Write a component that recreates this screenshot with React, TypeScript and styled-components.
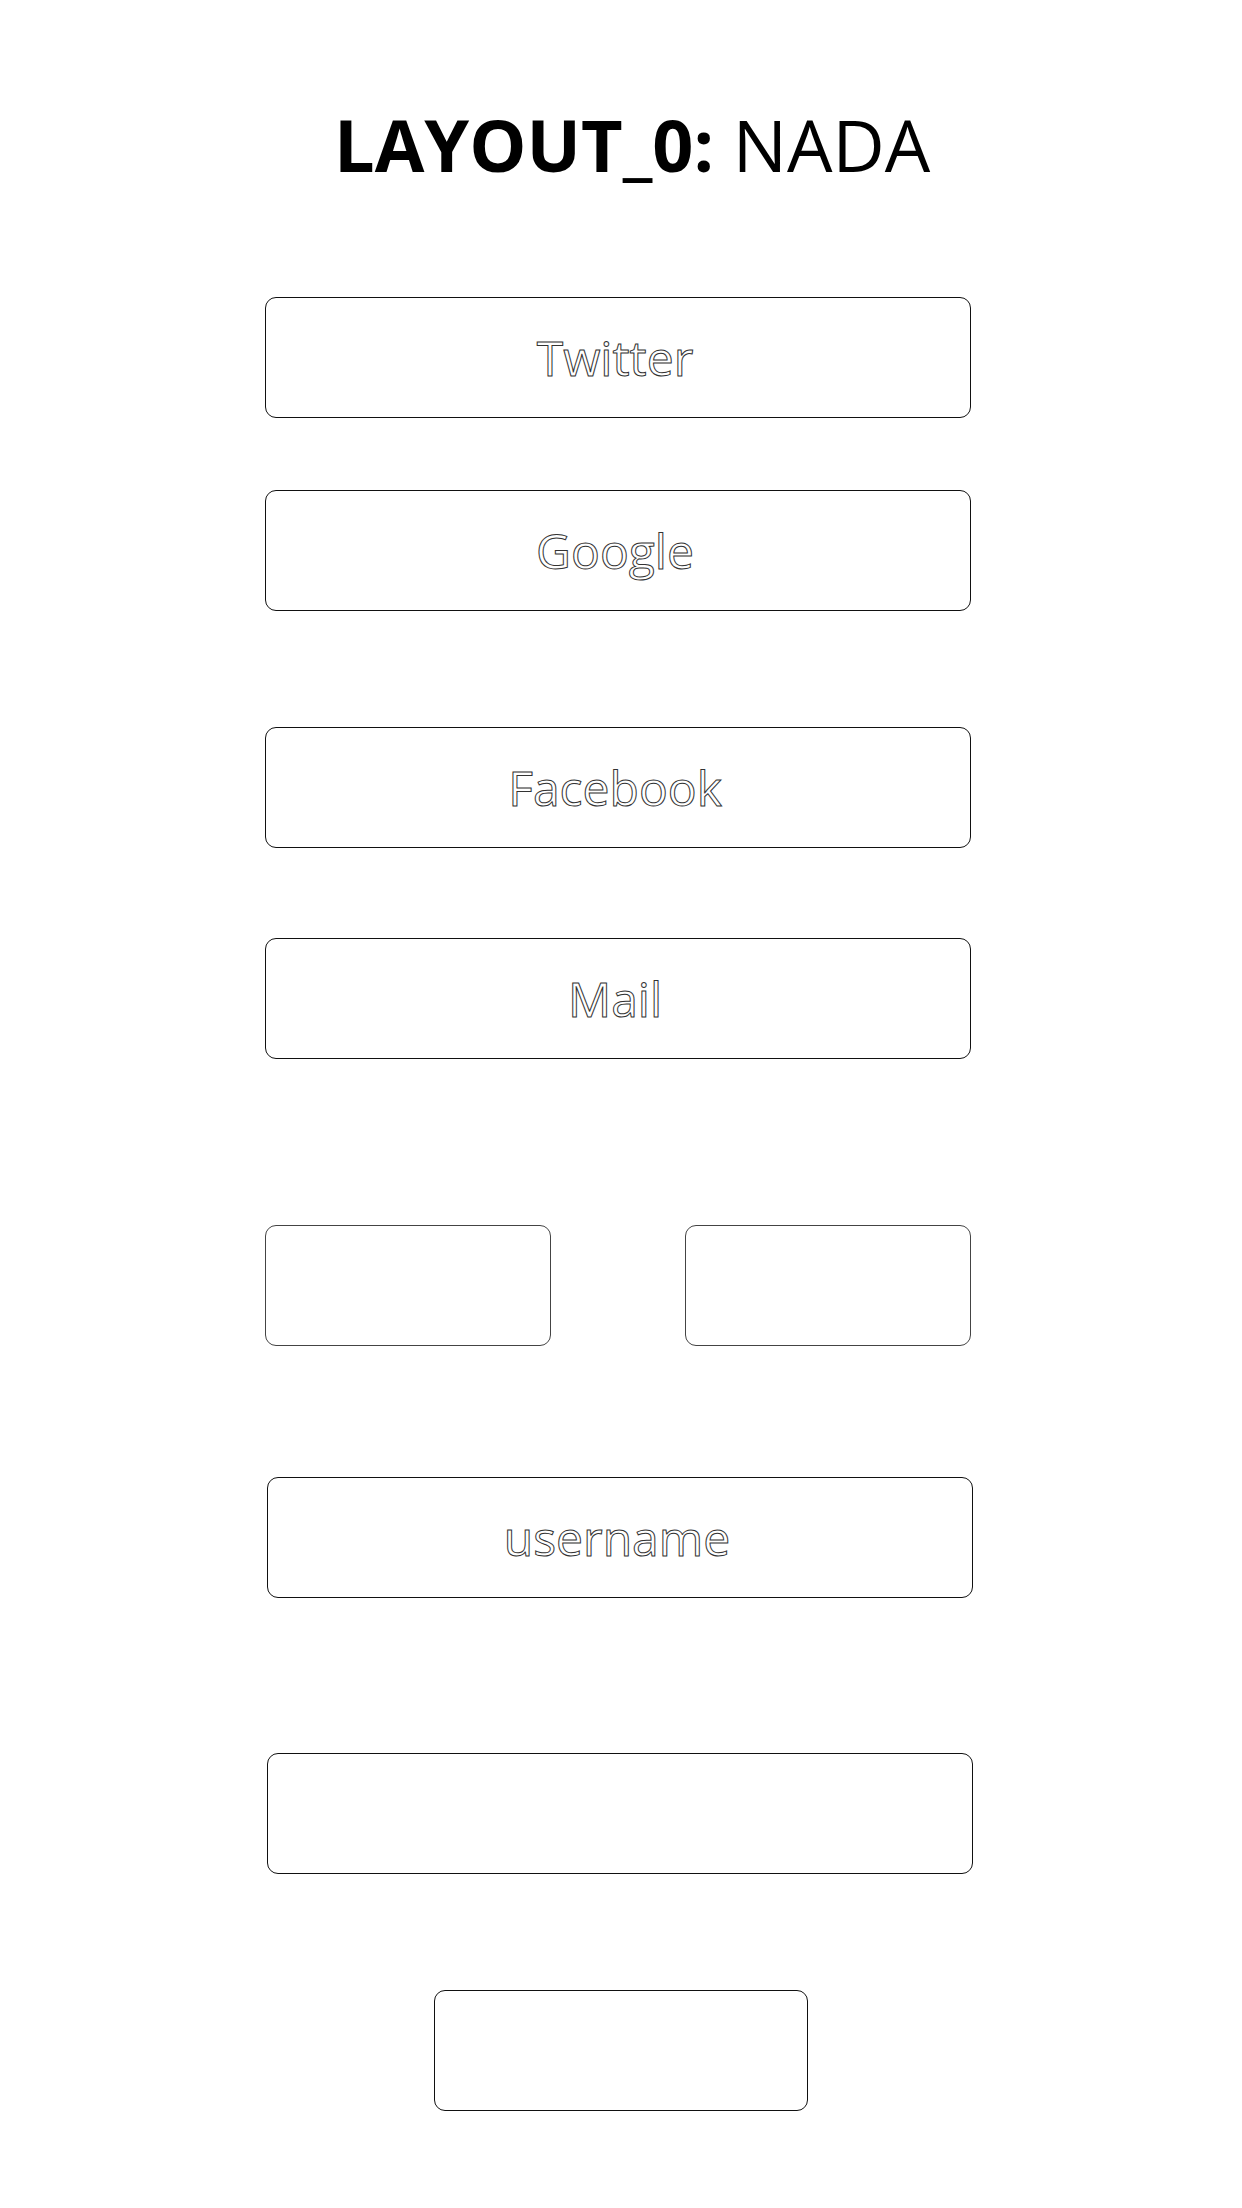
import React from "react";
import styled, { createGlobalStyle } from "styled-components";

const Global = createGlobalStyle`
  html, body { margin: 0; padding: 0; background: #fff; }
  body { font-family: "Open Sans", "Liberation Sans", sans-serif; }
`;

const Page = styled.div`
  width: 1242px;
  min-height: 2208px;
  display: flex;
  flex-direction: column;
  align-items: flex-start;
  padding-left: 265px;
  box-sizing: border-box;
`;

const Title = styled.h1`
  margin: 95px 0 0 69px;
  font-family: "Open Sans", sans-serif;
  font-size: 72px;
  line-height: 98px;
  font-weight: 400;
  color: #000;
  white-space: nowrap;
  b { font-weight: 700; }
`;

const Box = styled.div<{ $top: number; $left?: number; $width?: number }>`
  margin-top: ${(p) => p.$top}px;
  margin-left: ${(p) => p.$left ?? 0}px;
  width: ${(p) => p.$width ?? 706}px;
  height: 121px;
  box-sizing: border-box;
  border: 1.5px solid #111;
  border-radius: 11px;
  display: flex;
  align-items: center;
  justify-content: center;
  background: #fff;
`;

const Label = styled.span`
  font-family: "Open Sans", sans-serif;
  font-size: 48px;
  line-height: 65px;
  color: #fff;
  -webkit-text-stroke: 1px #333;
  margin-right: 6px;
`;

const Pair = styled.div<{ $top: number }>`
  margin-top: ${(p) => p.$top}px;
  width: 706px;
  display: flex;
  justify-content: space-between;
`;

const SmallBox = styled.div`
  width: 286px;
  height: 121px;
  box-sizing: border-box;
  border: 1.5px solid #444;
  border-radius: 11px;
`;

export default function App() {
  return (
    <>
      <Global />
      <Page>
        <Title>
          <b>LAYOUT_0:</b> NADA
        </Title>
        <Box $top={104}>
          <Label>Twitter</Label>
        </Box>
        <Box $top={72}>
          <Label>Google</Label>
        </Box>
        <Box $top={116}>
          <Label>Facebook</Label>
        </Box>
        <Box $top={90}>
          <Label>Mail</Label>
        </Box>
        <Pair $top={166}>
          <SmallBox />
          <SmallBox />
        </Pair>
        <Box $top={131} $left={2}>
          <Label>username</Label>
        </Box>
        <Box $top={155} $left={2} />
        <Box $top={116} $left={169} $width={374} />
      </Page>
    </>
  );
}
